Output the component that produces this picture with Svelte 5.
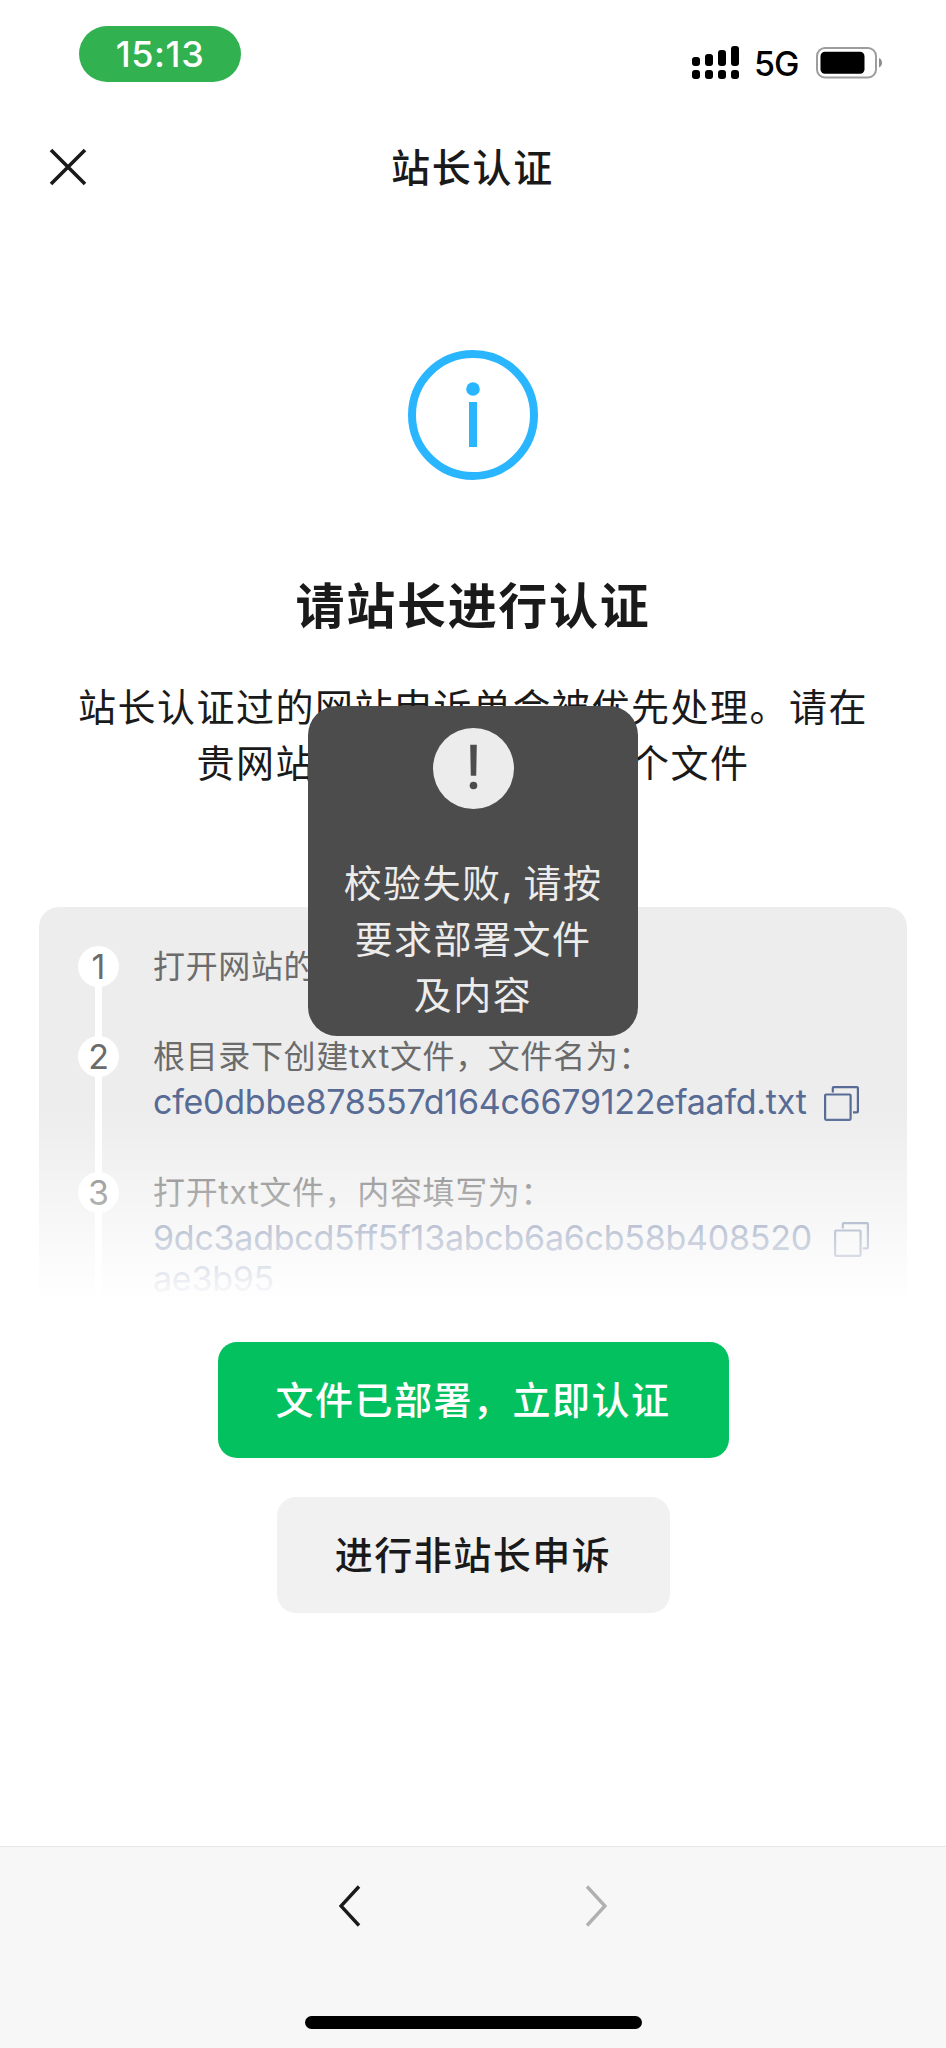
<script lang="ts">
  const signalBars = [9, 12, 16, 20];

  const steps = [
    { title: "打开网站的根目录", code: [], copy: "" },
    {
      title: "根目录下创建txt文件，文件名为：",
      code: ["cfe0dbbe878557d164c6679122efaafd.txt"],
      copy: "near",
    },
    {
      title: "打开txt文件，内容填写为：",
      code: ["9dc3adbcd5ff5f13abcb6a6cb58b408520", "ae3b95"],
      copy: "far",
    },
  ];

  const copyText = (lines: string[]) => {
    navigator.clipboard?.writeText(lines.join(""));
  };
</script>

<div class="screen">
  <div class="status-bar">
    <span class="time">15:13</span>
    <div class="status-right">
      <div class="signal">
        {#each signalBars as height}
          <div class="signal-col">
            <i style="height: {height}px"></i>
            <b></b>
          </div>
        {/each}
      </div>
      <span class="network">5G</span>
      <svg class="battery" width="67" height="32" viewBox="0 0 67 32">
        <rect x="1" y="1" width="59" height="29.5" rx="8" fill="none" stroke="#9d9d9d" stroke-width="2" />
        <rect x="4.5" y="4.7" width="44" height="22" rx="4.5" fill="#000" />
        <path d="M63 11q3 1.300 3 4.700t-3 4.700z" fill="#8d8d8d" />
      </svg>
    </div>
  </div>

  <header>
    <button class="close" aria-label="关闭">
      <svg width="38" height="38" viewBox="0 0 38 38">
        <path d="M2 2l34 34M36 2L2 36" stroke="#1a1a1a" stroke-width="3.600" fill="none" />
      </svg>
    </button>
    <h1>站长认证</h1>
  </header>

  <main>
    <svg class="info-icon" width="130" height="130" viewBox="0 0 130 130">
      <circle cx="65" cy="65" r="61" fill="none" stroke="#2ab6ff" stroke-width="8" />
      <circle cx="65" cy="39" r="6.800" fill="#2ab6ff" />
      <rect x="61" y="52" width="8" height="45" fill="#2ab6ff" />
    </svg>

    <h2>请站长进行认证</h2>
    <p class="desc">
      站长认证过的网站申诉单会被优先处理。请在<br />贵网站的根目录下部署一个文件
    </p>

    <ol class="steps">
      {#each steps as step, i}
        <li>
          <span class="num">{i + 1}</span>
          <div class="step-body">
            <p class="step-title">{step.title}</p>
            {#if step.code.length}
              <div class="code-row">
                <div class="code {step.copy}">
                  {#each step.code as line}
                    <p>{line}</p>
                  {/each}
                </div>
                <button class="copy" aria-label="复制" onclick={() => copyText(step.code)}>
                  <svg width="35" height="35" viewBox="0 0 35 35" fill="none" stroke="#576b95" stroke-width="2.200">
                    <rect x="1.100" y="8.500" width="25.500" height="25.300" rx="1" />
                    <path d="M8.800 6.500V2q0-.9.9-.9H33q.9 0 .9.9v23.500q0 .9-.9.900h-4" />
                  </svg>
                </button>
              </div>
            {/if}
          </div>
        </li>
      {/each}
    </ol>

    <button class="btn primary">文件已部署，立即认证</button>
    <button class="btn plain">进行非站长申诉</button>
  </main>

  <footer>
    <nav>
      <svg width="22" height="42" viewBox="0 0 22 42">
        <path d="M20 1.500L2 21l18 19.500" stroke="#1a1a1a" stroke-width="3.400" fill="none" />
      </svg>
      <svg width="22" height="42" viewBox="0 0 22 42">
        <path d="M2 1.500L20 21 2 40.500" stroke="#b0b0b0" stroke-width="3.400" fill="none" />
      </svg>
    </nav>
    <div class="home-indicator"></div>
  </footer>

  <div class="toast">
    <svg width="81" height="81" viewBox="0 0 81 81">
      <circle cx="40.500" cy="40.500" r="40.500" fill="#ececec" />
      <path d="M37.200 16.700h6.600l-.6 31h-5.400z" fill="#4c4c4c" />
      <circle cx="40.500" cy="57.500" r="3.800" fill="#4c4c4c" />
    </svg>
    <p>校验失败, 请按<br />要求部署文件<br />及内容</p>
  </div>
</div>

<style>
  :global(body) {
    background: #fff;
  }
  .screen {
    position: relative;
    display: flex;
    flex-direction: column;
    width: 946px;
    height: 2048px;
    overflow: hidden;
    background: #fff;
    color: #1a1a1a;
    font-family: "Noto Sans CJK SC", sans-serif;
  }
  h1,
  h2,
  p,
  ol {
    margin: 0;
    padding: 0;
  }
  svg {
    display: block;
  }
  button {
    padding: 0;
    border: none;
    background: none;
    font-family: inherit;
    color: inherit;
  }

  .status-bar {
    display: flex;
    justify-content: space-between;
    align-items: flex-start;
    height: 104px;
    padding: 26px 63px 0 79px;
    box-sizing: border-box;
    font-family: Inter, sans-serif;
  }
  .time {
    width: 162px;
    height: 55.5px;
    border-radius: 28px;
    background: #31b150;
    color: #fff;
    font-size: 36px;
    font-weight: 500;
    line-height: 56px;
    letter-spacing: 0.6px;
    text-align: center;
  }
  .status-right {
    display: flex;
    align-items: flex-start;
    color: #000;
  }
  .signal {
    display: flex;
    align-items: flex-end;
    gap: 5px;
    height: 33px;
    margin-top: 20px;
  }
  .signal-col i,
  .signal-col b {
    display: block;
    width: 8px;
    border-radius: 3px;
    background: #000;
  }
  .signal-col b {
    height: 9px;
    margin-top: 4px;
  }
  .network {
    width: 45px;
    margin: 17px 17px 0 15px;
    font-size: 34px;
    font-weight: 450;
    line-height: 41px;
    letter-spacing: -1px;
    white-space: nowrap;
  }
  .battery {
    margin-top: 21px;
  }

  header {
    position: relative;
    display: flex;
    justify-content: center;
    height: 126px;
    padding-top: 31px;
    box-sizing: border-box;
  }
  .close {
    position: absolute;
    left: 49px;
    top: 44px;
  }
  h1 {
    font-size: 39px;
    font-weight: 500;
    line-height: 60px;
    letter-spacing: 1.7px;
    margin-right: 1px;
  }

  main {
    display: flex;
    flex: 1;
    flex-direction: column;
    align-items: center;
  }
  .info-icon {
    margin-top: 120px;
  }
  h2 {
    margin-top: 88px;
    font-size: 49px;
    font-weight: 700;
    line-height: 70px;
    letter-spacing: 1.7px;
  }
  .desc {
    margin-top: 39px;
    font-size: 38px;
    line-height: 56px;
    letter-spacing: 1.5px;
    text-align: center;
    white-space: nowrap;
  }

  .steps {
    position: relative;
    width: 868px;
    height: 395px;
    margin-top: 118px;
    padding: 39px 0 0 39px;
    box-sizing: border-box;
    overflow: hidden;
    border-radius: 20px 20px 0 0;
    background: #ededed;
    color: #6b6b6b;
    list-style: none;
  }
  .steps::after {
    content: "";
    position: absolute;
    left: 0;
    right: 0;
    bottom: 0;
    height: 190px;
    background: linear-gradient(rgba(255, 255, 255, 0), #fff);
  }
  li {
    position: relative;
    display: flex;
    gap: 34px;
    min-height: 90px;
  }
  li::before {
    content: "";
    position: absolute;
    left: 17px;
    top: 0;
    bottom: 0;
    width: 7px;
    background: #fff;
  }
  li:first-child::before {
    top: 20px;
  }
  .num {
    position: relative;
    width: 41px;
    height: 41px;
    border-radius: 50%;
    background: #fff;
    font-family: Inter, sans-serif;
    font-size: 34px;
    line-height: 41px;
    text-align: center;
  }
  .step-title {
    height: 45px;
    font-family: Inter, "Noto Sans CJK SC", sans-serif;
    font-size: 32px;
    line-height: 41px;
    letter-spacing: 0.65px;
    white-space: nowrap;
  }
  .code-row {
    display: flex;
    align-items: flex-start;
    padding-bottom: 50px;
  }
  .code {
    color: #576b95;
    font-family: Inter, sans-serif;
    font-size: 34px;
    line-height: 41px;
    letter-spacing: -0.25px;
    white-space: nowrap;
  }
  .code.near {
    width: 671px;
  }
  .code.far {
    width: 681px;
  }
  .copy {
    margin-top: 5px;
  }

  .btn {
    height: 116px;
    border-radius: 19px;
    font-size: 38px;
    font-weight: 500;
    line-height: 110px;
    letter-spacing: 1.5px;
  }
  .btn::first-line {
    line-height: 110px;
  }
  .primary {
    width: 511px;
    margin-top: 40px;
    padding-bottom: 4px;
    background: #04c160;
    color: #fff;
  }
  .plain {
    width: 393px;
    margin-top: 39px;
    padding-bottom: 4px;
    background: #f1f1f1;
  }

  footer {
    display: flex;
    flex-direction: column;
    align-items: center;
    height: 202px;
    box-sizing: border-box;
    border-top: 1px solid #e8e8e8;
    background: #f7f7f7;
  }
  nav {
    display: flex;
    justify-content: space-between;
    width: 268px;
    margin-top: 38px;
  }
  .home-indicator {
    width: 337px;
    height: 13px;
    margin-top: 89px;
    border-radius: 7px;
    background: #000;
  }

  .toast {
    position: absolute;
    left: 308px;
    top: 706px;
    display: flex;
    flex-direction: column;
    align-items: center;
    width: 330px;
    height: 330px;
    padding-top: 22px;
    box-sizing: border-box;
    border-radius: 29px;
    background: #4c4c4c;
    color: #ececec;
  }
  .toast p {
    margin-top: 46px;
    font-family: Inter, "Noto Sans CJK SC", sans-serif;
    font-size: 38px;
    line-height: 56px;
    letter-spacing: 1.45px;
    word-spacing: -2.5px;
    text-align: center;
    white-space: nowrap;
  }
</style>
